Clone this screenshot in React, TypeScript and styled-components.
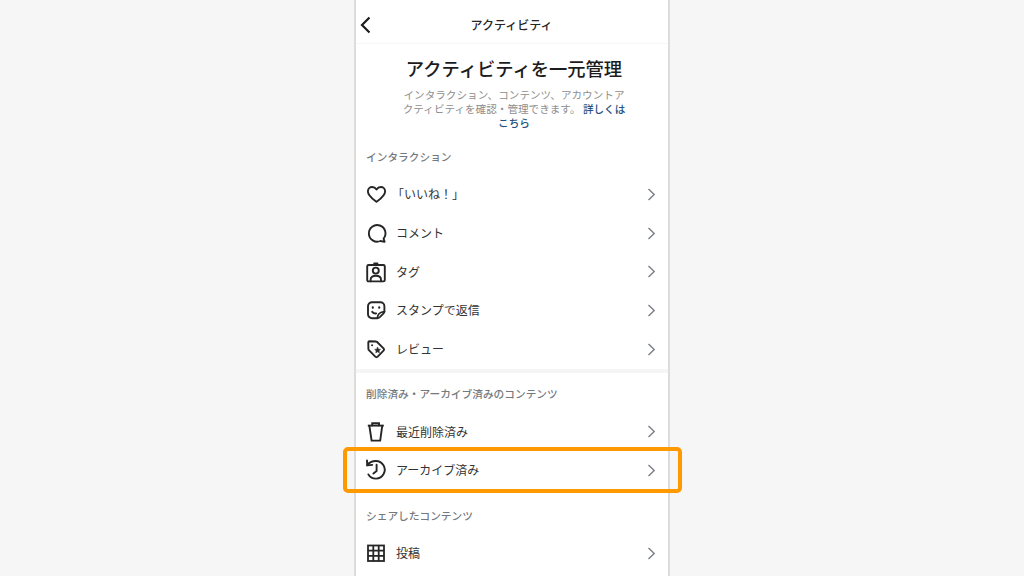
import React from "react";
import styled, { createGlobalStyle } from "styled-components";

const Global = createGlobalStyle`
  html, body { margin: 0; padding: 0; width: 1024px; height: 576px; overflow: hidden; background: #f6f6f6; }
  * { box-sizing: border-box; }
`;
const Stage = styled.div`
  position: relative;
  width: 1024px;
  height: 576px;
  overflow: hidden;
  display: flex;
  justify-content: center;
  font-family: "Noto Sans CJK JP", "Liberation Sans", sans-serif;
`;
const Phone = styled.div`
  width: 316px;
  height: 576px;
  background: #fff;
  border-left: 2px solid #dfdbd8;
  border-right: 2px solid #dfdbd8;
  overflow: hidden;
`;
const Header = styled.header`
  height: 44px;
  display: flex;
  align-items: center;
  justify-content: center;
  position: relative;
  border-bottom: 1px solid #f7f7f7;
`;
const Back = styled.svg`
  position: absolute;
  left: 0;
  top: 15px;
  width: 14px;
  height: 20px;
`;
const HeaderTitle = styled.div`
  font-size: 12px;
  font-weight: 500;
  color: #262626;
  line-height: 16px;
  margin: 6px 1px 0 0;
`;
const Intro = styled.section`
  padding: 11px 0 0 4px;
  text-align: center;
  display: flex;
  flex-direction: column;
  align-items: center;
`;
const Headline = styled.h1`
  margin: 0;
  font-size: 18.3px;
  line-height: 26px;
  font-weight: 500;
  color: #1c1c1c;
  white-space: nowrap;
`;
const Desc = styled.p`
  width: 228px;
  margin: 7px 0 0;
  font-size: 10.6px;
  line-height: 14px;
  color: #8e8e8e;
  font-weight: 400;
`;
const Link = styled.span`
  color: #27527f;
  font-weight: 500;
`;
const SectionLabel = styled.div<{ $top: number }>`
  margin-top: ${(p) => p.$top}px;
  padding-left: 10px;
  font-size: 10.7px;
  line-height: 16px;
  font-weight: 500;
  color: #737980;
`;
const List = styled.div<{ $top: number }>`
  margin-top: ${(p) => p.$top}px;
  display: flex;
  flex-direction: column;
`;
const Row = styled.div`
  height: 38.7px;
  display: flex;
  align-items: center;
  padding: 0 12px 0 10px;
`;
const IconBox = styled.svg`
  width: 20px;
  height: 20px;
  flex: none;
  fill: none;
  overflow: visible;
  stroke: #262626;
  stroke-width: 1.9;
  stroke-linecap: round;
  stroke-linejoin: round;
`;
const RowLabel = styled.div<{ $bracket?: boolean }>`
  flex: 1;
  margin-left: ${(p) => (p.$bracket ? 6 : 10)}px;
  font-size: 12px;
  line-height: 16px;
  color: #333;
`;
const Chevron = styled.svg`
  width: 9px;
  height: 13px;
  flex: none;
  fill: none;
  stroke: #7b7f85;
  stroke-width: 1.4;
`;
const Divider = styled.div`
  height: 4px;
  background: #f5f5f5;
  margin-top: 1px;
`;
const Highlight = styled.div`
  position: absolute;
  left: 343px;
  top: 447px;
  width: 339px;
  height: 46px;
  border: 4px solid #ff9900;
  border-radius: 5px;
`;

const icons: Record<string, React.ReactNode> = {
  heart: <path d="M10.5 17.8C6.5 14.7 1.9 11.6 1.9 7.4 1.9 4.7 3.9 3 6.2 3c1.9 0 3.3 1 4.3 2.6C11.5 4 12.9 3 14.8 3c2.3 0 4.3 1.7 4.3 4.4 0 4.2-4.6 7.3-8.6 10.4Z" />,
  comment: <path d="M17.6 15.6A8.3 8.3 0 1 0 14.4 18l4.2.9-1-3.3Z" />,
  tag: (
    <>
      <rect x="1.2" y="3" width="17.6" height="16.4" rx="1.4" />
      <path d="M8 3V1.2h3.6V3" strokeWidth="1.4" />
      <circle cx="9.8" cy="8.6" r="3" />
      <path d="M4.6 19.2v-1.4c0-2.6 2-4 5.2-4s5.2 1.4 5.2 4v1.4" />
    </>
  ),
  sticker: (
    <>
      <path d="M18.4 11.4V6.2a4 4 0 0 0-4-4H6a4 4 0 0 0-4 4v8a4 4 0 0 0 4 4h5.2c1 0 1.8-.4 2.6-1.1l3.3-3.2c.8-.8 1.3-1.5 1.3-2.5Z" />
      <path d="M11.4 18c0-3.4 2.6-6.2 7-6.4" />
      <path d="M6.8 7.4v.3M13.2 7.4v.3" strokeWidth="2.2" />
      <path d="M6.2 11.8c1 1.3 2.4 1.8 4 1.6" />
    </>
  ),
  review: (
    <>
      <path d="M2.3 3.4c0-.6.5-1.1 1.1-1.1l6.6.2c.5 0 .8.2 1.1.5l6.4 6.4c.7.7.7 1.6 0 2.3l-5.8 6c-.7.7-1.7.7-2.4 0L2.9 11.2c-.3-.3-.5-.7-.5-1.1Z" />
      <circle cx="6.1" cy="6.2" r="1" fill="#262626" stroke="none" />
      <path d="m11.6 8.3.9 1.9 2 .2-1.5 1.4.4 2-1.8-1-1.8 1 .4-2-1.5-1.4 2-.2Z" fill="#262626" strokeWidth=".6" />
    </>
  ),
  trash: (
    <>
      <path d="M1.8 3.6h16" strokeLinecap="butt" />
      <path d="M6.2 3.4V1.2h6.8v2.2" strokeLinejoin="miter" />
      <path d="m3.4 4 2.2 14.6h8.6L16.2 4" strokeLinejoin="miter" />
    </>
  ),
  archive: (
    <>
      <path d="M1 .4 1.2 5.4l5-.5" />
      <path d="M1.2 5.2C3 2.6 5.6 1 9.8 1a8.8 8.8 0 1 1-7.4 13.4" />
      <path d="M10.6 4.8V11l-3.2 2.6" />
    </>
  ),
  grid: (
    <>
      <rect x="2" y="2.5" width="16" height="15.5" strokeWidth="1.8" strokeLinejoin="miter" />
      <path d="M7.3 2.5v15.5M12.7 2.5v15.5M2 7.7h16M2 12.9h16" strokeWidth="1.8" strokeLinecap="butt" />
    </>
  ),
};

const ItemRow = ({ icon, label, bracket }: { icon: string; label: string; bracket?: boolean }) => (
  <Row>
    <IconBox viewBox="0 0 20 20">{icons[icon]}</IconBox>
    <RowLabel $bracket={bracket}>{label}</RowLabel>
    <Chevron viewBox="0 0 9 13">
      <path d="M1.5 1 7.2 6.5 1.5 12" />
    </Chevron>
  </Row>
);

export default function App() {
  return (
    <Stage>
      <Global />
      <Phone>
        <Header>
          <Back viewBox="0 0 14 20" fill="none" stroke="#1c1c1c" strokeWidth="2.2">
            <path d="M11.5 2.5 4 10l7.5 7.5" transform="translate(2 0)" />
          </Back>
          <HeaderTitle>アクティビティ</HeaderTitle>
        </Header>
        <Intro>
          <Headline>アクティビティを一元管理</Headline>
          <Desc>
            インタラクション、コンテンツ、アカウントアクティビティを確認・管理できます。 <Link>詳しくはこちら</Link>
          </Desc>
        </Intro>
        <SectionLabel $top={19}>インタラクション</SectionLabel>
        <List $top={10}>
          <ItemRow icon="heart" label="「いいね！」" bracket />
          <ItemRow icon="comment" label="コメント" />
          <ItemRow icon="tag" label="タグ" />
          <ItemRow icon="sticker" label="スタンプで返信" />
          <ItemRow icon="review" label="レビュー" />
        </List>
        <Divider />
        <SectionLabel $top={13}>削除済み・アーカイブ済みのコンテンツ</SectionLabel>
        <List $top={10}>
          <ItemRow icon="trash" label="最近削除済み" />
          <ItemRow icon="archive" label="アーカイブ済み" />
        </List>
        <SectionLabel $top={18}>シェアしたコンテンツ</SectionLabel>
        <List $top={10}>
          <ItemRow icon="grid" label="投稿" />
        </List>
      </Phone>
      <Highlight />
    </Stage>
  );
}
